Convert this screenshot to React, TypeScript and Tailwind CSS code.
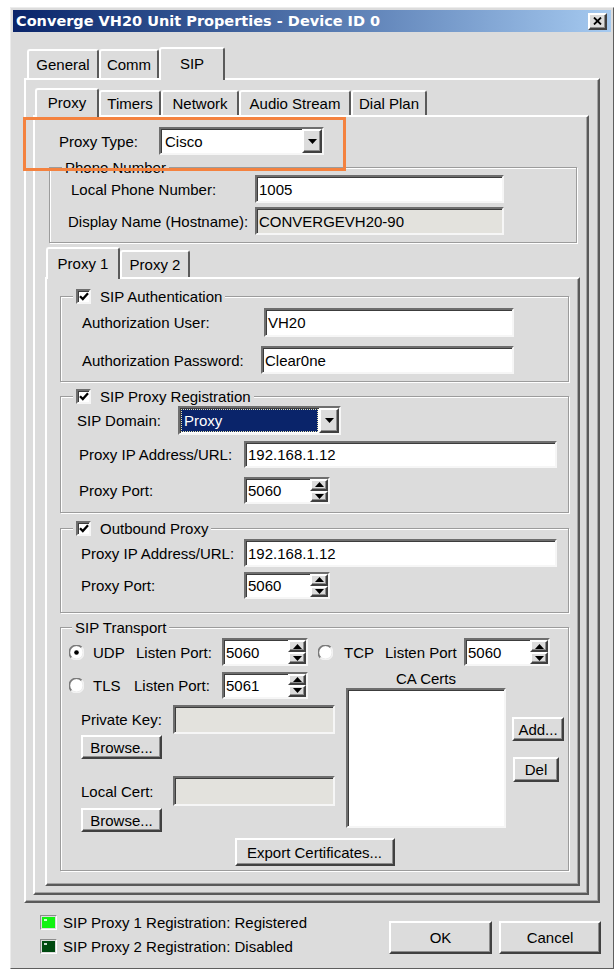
import React from "react";

// Classic Windows 3D bevels
const sunken =
  "border-2 border-t-[#6e6e6e] border-l-[#6e6e6e] border-r-[#f6f6f6] border-b-[#f6f6f6] shadow-[inset_1px_1px_0_#3c3c3c]";
const raised =
  "border-2 border-t-white border-l-white border-r-[#404040] border-b-[#404040] shadow-[inset_-1px_-1px_0_#8c8c8c]";
const panel =
  "border-2 border-t-white border-l-white border-r-[#5a5a5a] border-b-[#5a5a5a] shadow-[inset_-1px_-1px_0_#a4a4a4]";

function Tab({ label, selected, className }: { label: string; selected?: boolean; className: string }) {
  return (
    <div
      className={`flex items-center justify-center rounded-t-[3px] border-t-2 border-l-2 border-r-2 border-t-white border-l-white border-r-[#5a5a5a] bg-[#dcdcdc] ${
        selected ? "pb-[2px]" : ""
      } ${className}`}
    >
      {label}
    </div>
  );
}

function Field({ value, className, disabled }: { value?: string; className: string; disabled?: boolean }) {
  return (
    <div className={`${sunken} flex items-center pl-[2px] ${disabled ? "bg-[#e3e2dd]" : "bg-white"} ${className}`}>
      {value && <span>{value}</span>}
    </div>
  );
}

function Arrow({ dir }: { dir: "down" | "up" }) {
  return dir === "down" ? (
    <svg width="9" height="5" viewBox="0 0 9 5">
      <path d="M0 0H9L4.5 5Z" fill="#000" />
    </svg>
  ) : (
    <svg width="9" height="5" viewBox="0 0 9 5">
      <path d="M0 5H9L4.5 0Z" fill="#000" />
    </svg>
  );
}

function Combo({ value, className, focused }: { value: string; className: string; focused?: boolean }) {
  return (
    <div className={`${sunken} flex bg-white ${className}`}>
      <div className="flex flex-1 items-center p-[1px]">
        {focused ? (
          <div className="flex h-full w-full items-center border border-dotted border-[#e6e2b0] bg-[#0a246a] pl-[2px] text-white">
            {value}
          </div>
        ) : (
          <span className="pl-[3px]">{value}</span>
        )}
      </div>
      <div className={`${raised} flex w-[20px] items-center justify-center bg-[#dcdcdc]`}>
        <Arrow dir="down" />
      </div>
    </div>
  );
}

function Spin({ value, className }: { value: string; className: string }) {
  return (
    <div className={`${sunken} flex bg-white ${className}`}>
      <div className="flex flex-1 items-center pl-[2px]">{value}</div>
      <div className="flex w-[18px] flex-col">
        <div className={`${raised} flex flex-1 items-center justify-center bg-[#dcdcdc]`}>
          <Arrow dir="up" />
        </div>
        <div className={`${raised} flex flex-1 items-center justify-center bg-[#dcdcdc]`}>
          <Arrow dir="down" />
        </div>
      </div>
    </div>
  );
}

function Check() {
  return (
    <div className={`${sunken} flex h-[15px] w-[15px] items-center justify-center bg-white`}>
      <svg width="10" height="9" viewBox="0 0 10 9">
        <path d="M1 4.2L3.8 7L9 1.2" fill="none" stroke="#000" strokeWidth="2.3" />
      </svg>
    </div>
  );
}

function Radio({ checked }: { checked?: boolean }) {
  return (
    <svg width="15" height="15" viewBox="0 0 15 15" className="shrink-0">
      <circle cx="7.5" cy="7.5" r="6.2" fill="#fff" />
      <path d="M2.4 12.6A7 7 0 0 1 12.6 2.4" fill="none" stroke="#7a7a7a" strokeWidth="1.6" />
      <path d="M12.6 2.4A7 7 0 0 1 2.4 12.6" fill="none" stroke="#f2f2f2" strokeWidth="1.6" />
      {checked && <circle cx="7.5" cy="7.5" r="2.3" fill="#000" />}
    </svg>
  );
}

function Button({ label, className }: { label: string; className: string }) {
  return <div className={`${raised} flex items-center justify-center bg-[#dcdcdc] ${className}`}>{label}</div>;
}

function Group({
  legend,
  className,
  legendClass,
  children,
}: {
  legend: React.ReactNode;
  className: string;
  legendClass: string;
  children: React.ReactNode;
}) {
  return (
    <div className={`flex flex-col border border-[#9c9c9c] shadow-[inset_1px_1px_0_#ffffff,1px_1px_0_#ffffff] ${className}`}>
      <div className={`-mt-[9px] flex h-[16px] w-fit items-center bg-[#dcdcdc] px-[3px] ${legendClass}`}>{legend}</div>
      {children}
    </div>
  );
}

function CheckLegend({ label }: { label: string }) {
  return (
    <>
      <Check />
      <span className="ml-[9px]">{label}</span>
    </>
  );
}

function Led({ on }: { on?: boolean }) {
  return (
    <div className="h-[15px] w-[17px] border border-t-[#8c8c8c] border-l-[#8c8c8c] border-r-white border-b-white p-[1px]">
      <div className={`h-full w-full pl-[2px] pt-[2px] ${on ? "bg-[#12f312]" : "bg-[#004a10]"}`}>
        <div className="h-[2px] w-[3px] bg-white/80" />
      </div>
    </div>
  );
}

export default function App() {
  return (
    <div className="relative h-[971px] w-[616px] overflow-hidden bg-white font-['Liberation_Sans',Arial,sans-serif] text-[15px] leading-none text-black">
      <div className="ml-[10px] mt-[7px] flex h-[962px] w-[604px] flex-col border border-t-[#ececec] border-l-[#ececec] border-r-[#5e5e5e] border-b-[#5e5e5e] bg-[#dcdcdc] p-[2px]">
        {/* caption bar */}
        <div className="flex h-[22px] items-center justify-between bg-linear-to-r from-[#0a246a] to-[#a6caf0] pl-[3px] pr-[4px]">
          <span className="font-['DejaVu_Sans',Verdana,sans-serif] text-[14.5px] font-bold text-white">
            Converge VH20 Unit Properties - Device ID 0
          </span>
          <div className={`${raised} flex h-[17px] w-[19px] items-center justify-center bg-[#dcdcdc]`}>
            <svg width="9" height="8" viewBox="0 0 9 8">
              <path d="M1 0.5L8 7.5M8 0.5L1 7.5" stroke="#000" strokeWidth="1.8" />
            </svg>
          </div>
        </div>

        <div className="flex flex-1 flex-col px-[11px]">
          {/* main tabs */}
          <div className="relative z-10 -mb-[2px] mt-[15px] flex h-[33px] items-start pl-[3px]">
            <Tab label="General" className="mt-[2px] h-[29px] w-[72px]" />
            <Tab label="Comm" className="mt-[2px] h-[29px] w-[60px]" />
            <Tab label="SIP" selected className="h-[33px] w-[66px]" />
          </div>
          <div className={`${panel} flex h-[825px] flex-col`}>
            {/* SIP sub tabs */}
            <div className="relative z-10 -mb-[2px] mt-[8px] flex h-[29px] items-start pl-[9px]">
              <Tab label="Proxy" selected className="h-[29px] w-[64px]" />
              <Tab label="Timers" className="mt-[2px] h-[25px] w-[62px]" />
              <Tab label="Network" className="mt-[2px] h-[25px] w-[78px]" />
              <Tab label="Audio Stream" className="mt-[2px] h-[25px] w-[112px]" />
              <Tab label="Dial Plan" className="mt-[2px] h-[25px] w-[76px]" />
            </div>
            <div className={`${panel} ml-[7px] flex h-[780px] w-[556px] flex-col`}>
              <div className="mt-[10px] flex h-[28px] items-center pl-[24px]">
                <span className="w-[100px]">Proxy Type:</span>
                <Combo value="Cisco" className="h-[28px] w-[165px]" />
              </div>

              <Group legend="Phone Number" className="ml-[14px] mt-[12px] h-[76px] w-[528px]" legendClass="ml-[12px]">
                <div className="flex items-center pl-[21px]">
                  <span className="w-[184px]">Local Phone Number:</span>
                  <Field value="1005" className="h-[28px] w-[249px]" />
                </div>
                <div className="mt-[4px] flex items-center pl-[18px]">
                  <span className="w-[187px]">Display Name (Hostname):</span>
                  <Field value="CONVERGEVH20-90" disabled className="h-[28px] w-[249px]" />
                </div>
              </Group>

              {/* proxy tabs */}
              <div className="relative z-10 -mb-[2px] mt-[4px] flex h-[32px] items-start pl-[11px]">
                <Tab label="Proxy 1" selected className="h-[32px] w-[74px]" />
                <Tab label="Proxy 2" className="mt-[3px] h-[27px] w-[70px]" />
              </div>
              <div className={`${panel} ml-[10px] flex h-[609px] w-[535px] flex-col`}>
                <Group
                  legend={<CheckLegend label="SIP Authentication" />}
                  className="ml-[13px] mt-[17px] h-[86px] w-[509px]"
                  legendClass="ml-[12px]"
                >
                  <div className="mt-[4px] flex items-center pl-[21px]">
                    <span className="w-[182px]">Authorization User:</span>
                    <Field value="VH20" className="h-[29px] w-[250px]" />
                  </div>
                  <div className="mt-[9px] flex items-center pl-[21px]">
                    <span className="w-[179px]">Authorization Password:</span>
                    <Field value="Clear0ne" className="h-[28px] w-[253px]" />
                  </div>
                </Group>

                <Group
                  legend={<CheckLegend label="SIP Proxy Registration" />}
                  className="ml-[13px] mt-[14px] h-[117px] w-[509px]"
                  legendClass="ml-[12px]"
                >
                  <div className="mt-[2px] flex items-center pl-[16px]">
                    <span className="w-[101px]">SIP Domain:</span>
                    <Combo value="Proxy" focused className="h-[29px] w-[163px]" />
                  </div>
                  <div className="mt-[6px] flex items-center pl-[18px]">
                    <span className="w-[165px]">Proxy IP Address/URL:</span>
                    <Field value="192.168.1.12" className="h-[27px] w-[313px]" />
                  </div>
                  <div className="mt-[9px] flex items-center pl-[18px]">
                    <span className="w-[165px]">Proxy Port:</span>
                    <Spin value="5060" className="h-[27px] w-[86px]" />
                  </div>
                </Group>

                <Group
                  legend={<CheckLegend label="Outbound Proxy" />}
                  className="ml-[13px] mt-[15px] h-[85px] w-[509px]"
                  legendClass="ml-[12px]"
                >
                  <div className="mt-[3px] flex items-center pl-[20px]">
                    <span className="w-[163px]">Proxy IP Address/URL:</span>
                    <Field value="192.168.1.12" className="h-[28px] w-[313px]" />
                  </div>
                  <div className="mt-[5px] flex items-center pl-[20px]">
                    <span className="w-[163px]">Proxy Port:</span>
                    <Spin value="5060" className="h-[27px] w-[86px]" />
                  </div>
                </Group>

                <Group legend="SIP Transport" className="ml-[13px] mt-[14px] h-[244px] w-[509px]" legendClass="ml-[11px]">
                  <div className="mt-[3px] flex h-[28px] items-center pl-[8px]">
                    <Radio checked />
                    <span className="ml-[9px] w-[43px]">UDP</span>
                    <span className="w-[86px]">Listen Port:</span>
                    <Spin value="5060" className="h-[28px] w-[86px]" />
                    <span className="ml-[10px] flex">
                      <Radio />
                    </span>
                    <span className="ml-[11px] w-[41px]">TCP</span>
                    <span className="w-[79px]">Listen Port</span>
                    <Spin value="5060" className="h-[28px] w-[86px]" />
                  </div>

                  <div className="mt-[6px] flex">
                    <div className="flex w-[274px] flex-col">
                      <div className="flex h-[26px] items-center pl-[8px]">
                        <Radio />
                        <span className="ml-[9px] w-[41px]">TLS</span>
                        <span className="w-[88px]">Listen Port:</span>
                        <Spin value="5061" className="h-[27px] w-[86px]" />
                      </div>
                      <div className="mt-[7px] flex items-center pl-[20px]">
                        <span className="w-[92px]">Private Key:</span>
                        <Field disabled className="h-[29px] w-[162px]" />
                      </div>
                      <div className="mt-[1px] pl-[20px]">
                        <Button label="Browse..." className="h-[24px] w-[81px]" />
                      </div>
                      <div className="mt-[17px] flex items-center pl-[20px]">
                        <span className="w-[92px]">Local Cert:</span>
                        <Field disabled className="h-[30px] w-[162px]" />
                      </div>
                      <div className="mt-[2px] pl-[20px]">
                        <Button label="Browse..." className="h-[24px] w-[81px]" />
                      </div>
                    </div>

                    <div className="ml-[11px] flex w-[160px] flex-col items-center">
                      <div className="flex h-[12px] items-center">CA Certs</div>
                      <div className={`${sunken} mt-[4px] h-[140px] w-[160px] bg-white`} />
                    </div>

                    <div className="ml-[6px] flex flex-col">
                      <Button label="Add..." className="mt-[45px] h-[24px] w-[52px]" />
                      <Button label="Del" className="ml-[1px] mt-[16px] h-[25px] w-[46px]" />
                    </div>
                  </div>

                  <div className="mt-[6px] flex justify-center">
                    <Button label="Export Certificates..." className="h-[28px] w-[160px]" />
                  </div>
                </Group>
              </div>
            </div>
          </div>

          {/* status + dialog buttons */}
          <div className="flex justify-between">
            <div className="mt-[12px] flex flex-col gap-[9px] pl-[16px]">
              <div className="flex items-center gap-[6px]">
                <Led on />
                <span>SIP Proxy 1 Registration: Registered</span>
              </div>
              <div className="flex items-center gap-[6px]">
                <Led />
                <span>SIP Proxy 2 Registration: Disabled</span>
              </div>
            </div>
            <div className="-mr-[1px] mt-[18px] flex gap-[7px]">
              <Button label="OK" className="h-[33px] w-[103px]" />
              <Button label="Cancel" className="h-[33px] w-[102px]" />
            </div>
          </div>
        </div>
      </div>

      {/* highlight annotation */}
      <div className="absolute left-[23px] top-[117px] h-[54px] w-[323px] border-[3px] border-[#f4823f]" />
    </div>
  );
}
